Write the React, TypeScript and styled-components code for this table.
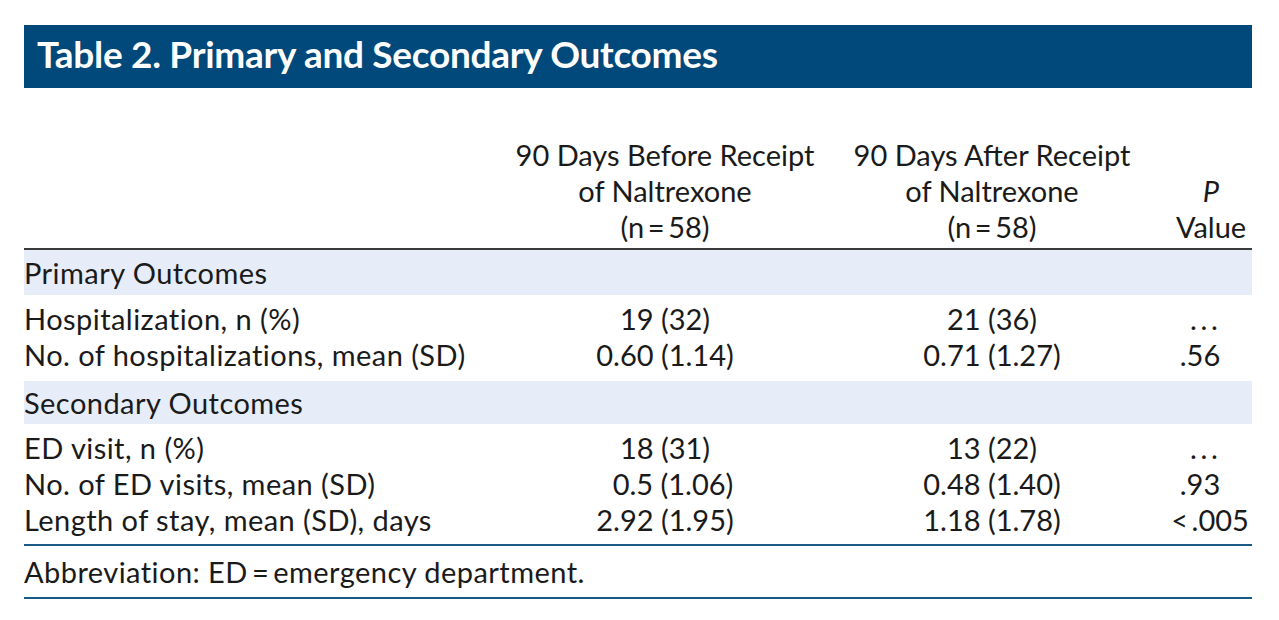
import React from 'react'
import styled, {createGlobalStyle} from 'styled-components'

const GlobalStyle = createGlobalStyle`
  html, body {
    margin: 0;
    padding: 0;
    background: #ffffff;
  }
  body {
    font-family: Lato, "Liberation Sans", sans-serif;
    color: #1a1a1a;
  }
`

const Page = styled.div`
  padding: 25px 27px 20px 24px;
`

const TitleBar = styled.div`
  background: #01497a;
  height: 63px;
  box-sizing: border-box;
  display: flex;
  align-items: center;
  padding-left: 13px;
  padding-bottom: 7px;
  color: #ffffff;
  font-size: 37px;
  font-weight: 700;
  letter-spacing: -0.3px;
`

const Grid = styled.div`
  display: grid;
  grid-template-columns: 478px 326px 328px 96px;
  font-size: 29px;
  line-height: 36px;
`

const HeadCell = styled.div<{ $shift?: number }>`
  padding-top: 49px;
  padding-bottom: 3px;
  padding-left: ${p => (p.$shift || 0) * 2}px;
  border-bottom: 2px solid #3b3b3b;
  text-align: center;
  display: flex;
  flex-direction: column;
  justify-content: flex-end;
`

const Band = styled.div<{ $h: number }>`
  grid-column: 1 / -1;
  background: #e6ecf8;
  height: ${p => p.$h}px;
  display: flex;
  align-items: center;
  letter-spacing: 0.45px;
`

const Spacer = styled.div<{ $h: number }>`
  grid-column: 1 / -1;
  height: ${p => p.$h}px;
`

const Label = styled.div`
  height: 36px;
  white-space: nowrap;
  letter-spacing: 0.45px;
`

// shift moves the centred figure sideways, to line up decimals as the print does
const Value = styled.div<{ $shift?: number }>`
  height: 36px;
  text-align: center;
  white-space: nowrap;
  position: relative;
  left: ${p => p.$shift || 0}px;
`

const Rule = styled.div<{ $top: number }>`
  grid-column: 1 / -1;
  margin-top: ${p => p.$top}px;
  border-top: 2px solid #1b5985;
`

const Note = styled.div`
  grid-column: 1 / -1;
  height: 51px;
  display: flex;
  align-items: center;
  letter-spacing: 0.45px;
`

const Italic = styled.span`
  font-style: italic;
`

type Cell = { text: string; shift?: number }
type Row = [string, Cell, Cell, Cell]

const dots = '.\u2009.\u2009.'

const primary: Row[] = [
    ['Hospitalization, n (%)', {text: '19 (32)'}, {text: '21 (36)'}, {text: dots}],
    ['No. of hospitalizations, mean (SD)', {text: '0.60 (1.14)'}, {text: '0.71 (1.27)'}, {text: '.56', shift: -4}],
]

const secondary: Row[] = [
    ['ED visit, n (%)', {text: '18 (31)'}, {text: '13 (22)'}, {text: dots}],
    ['No. of ED visits, mean (SD)', {text: '0.5 (1.06)', shift: 8}, {text: '0.48 (1.40)'}, {text: '.93', shift: -4}],
    ['Length of stay, mean (SD), days', {text: '2.92 (1.95)'}, {text: '1.18 (1.78)'}, {text: '<\u2009.005', shift: 6}],
]

const renderRows = (rows: Row[]) =>
    rows.map(r => (
        <React.Fragment key={r[0]}>
            <Label>{r[0]}</Label>
            <Value $shift={r[1].shift}>{r[1].text}</Value>
            <Value $shift={r[2].shift}>{r[2].text}</Value>
            <Value $shift={r[3].shift}>{r[3].text}</Value>
        </React.Fragment>
    ))

export default function App() {
    return (
        <>
            <GlobalStyle/>
            <Page>
                <TitleBar>Table 2. Primary and Secondary Outcomes</TitleBar>
                <Grid>
                    <HeadCell/>
                    <HeadCell>
                        <span>90 Days Before Receipt</span>
                        <span>of Naltrexone</span>
                        <span>(n{'\u2009=\u2009'}58)</span>
                    </HeadCell>
                    <HeadCell>
                        <span>90 Days After Receipt</span>
                        <span>of Naltrexone</span>
                        <span>(n{'\u2009=\u2009'}58)</span>
                    </HeadCell>
                    <HeadCell $shift={7}>
                        <Italic>P</Italic>
                        <span>Value</span>
                    </HeadCell>

                    <Band $h={45}>Primary Outcomes</Band>
                    <Spacer $h={6}/>
                    {renderRows(primary)}
                    <Spacer $h={8}/>

                    <Band $h={43}>Secondary Outcomes</Band>
                    <Spacer $h={6}/>
                    {renderRows(secondary)}

                    <Rule $top={6}/>
                    <Note>Abbreviation: ED{'\u2009=\u2009'}emergency department.</Note>
                    <Rule $top={0}/>
                </Grid>
            </Page>
        </>
    )
}
